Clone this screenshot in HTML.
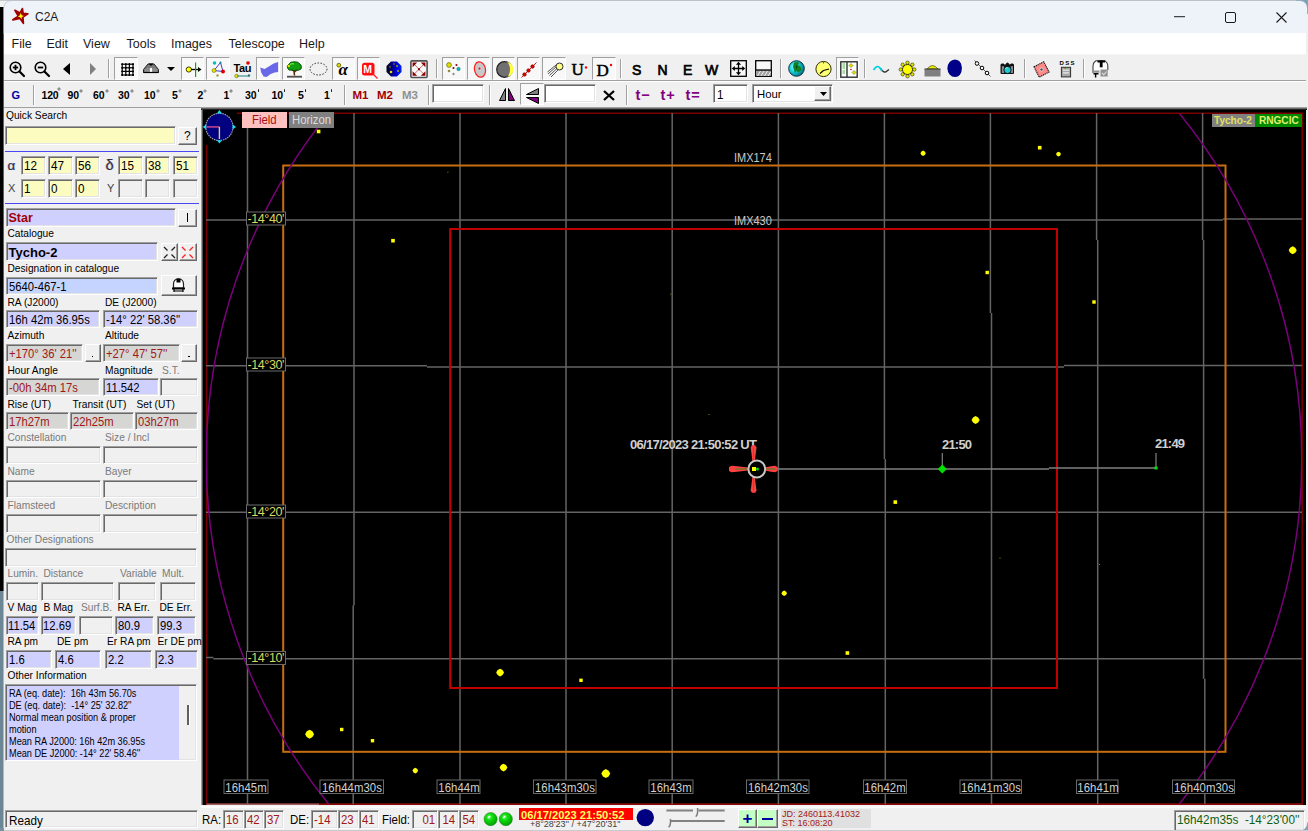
<!DOCTYPE html><html><head><meta charset="utf-8"><style>
html,body{margin:0;padding:0;}
body{width:1308px;height:831px;overflow:hidden;position:relative;background:#f0f0f0;font-family:'Liberation Sans',sans-serif;}
.a{position:absolute;box-sizing:content-box;}
.t{position:absolute;white-space:pre;line-height:1;font-family:'Liberation Sans',sans-serif;}
.sk{border-top:1px solid #a0a0a0;border-left:1px solid #a0a0a0;border-bottom:1px solid #fff;border-right:1px solid #fff;box-shadow:inset 1px 1px 0 #696969, inset -1px -1px 0 #e3e3e3;}
.rz{border-top:1px solid #fff;border-left:1px solid #fff;border-bottom:1px solid #696969;border-right:1px solid #696969;box-shadow:inset -1px -1px 0 #a0a0a0;}
.pr{border-top:1px solid #a0a0a0;border-left:1px solid #a0a0a0;border-bottom:1px solid #fff;border-right:1px solid #fff;background:#f8f8f8;}
svg{overflow:visible}
</style></head><body>
<div class="a" style="left:0px;top:0px;width:1308px;height:831px;background:#f0f0f0"></div>
<div class="a" style="left:0px;top:0px;width:4px;height:7px;background:#f2f2f2"></div>
<div class="a" style="left:0px;top:7px;width:3px;height:584px;background:#000"></div>
<div class="a" style="left:3px;top:7px;width:1px;height:584px;background:#606060"></div>
<div class="a" style="left:0px;top:591px;width:3px;height:240px;background:#6b8796"></div>
<div class="a" style="left:3px;top:591px;width:1px;height:240px;background:#b0b8c0"></div>
<div class="a" style="left:0px;top:0px;width:1308px;height:1px;background:#c4c8cc"></div>
<div class="a" style="left:1296px;top:0px;width:12px;height:14px;background:#7ba1bd"></div>
<div class="a" style="left:4px;top:1px;width:1303px;height:32px;background:#eef2f9;border-radius:7px 7px 0 0;box-shadow:0 0 0 0.5px #b8bcc0"></div>
<div class="a" style="left:1306px;top:14px;width:2px;height:817px;background:#f0f0f0"></div>
<svg class="a" style="left:0px;top:0px;" width="40" height="30" viewBox="0 0 40 30"><path d="M22.4 8.6 L23.1 13.4 L27.9 13.9 L22.9 17.1 L23.4 23.3 L20 18.4 L12.9 19.8 L18.3 16.1 L14.9 10.3 L20 13.1 Z" fill="#a00000" stroke="#a00000" stroke-width="1.7" stroke-linejoin="round"/><path d="M20.7 12.8 L21.7 15.2 L24 16 L21.8 17 L21.5 19.3 L20.1 17.3 L17.8 16.4 L19.9 15.3 Z" fill="#ffff00"/></svg>
<div class="t" style="left:35px;top:11.34px;font-size:12px;color:#1a1a1a;font-weight:normal;">C2A</div>
<svg class="a" style="left:1174px;top:16px;" width="11" height="2" viewBox="0 0 11 2"><rect x="0" y="0.2" width="11" height="1" fill="#1a1a1a"/></svg>
<svg class="a" style="left:1225px;top:12px;" width="11" height="11" viewBox="0 0 11 11"><rect x="0.5" y="0.5" width="10" height="10" rx="1.5" fill="none" stroke="#1a1a1a" stroke-width="1"/></svg>
<svg class="a" style="left:1276px;top:12px;" width="11" height="11" viewBox="0 0 11 11"><path d="M0.5 0.5 L10.5 10.5 M10.5 0.5 L0.5 10.5" stroke="#1a1a1a" stroke-width="1.1"/></svg>
<div class="a" style="left:4px;top:33px;width:1302px;height:21px;background:#ffffff"></div>
<div class="a" style="left:4px;top:54px;width:1302px;height:1px;background:#f4f4f4"></div>
<div class="t" style="left:11.5px;top:37.92px;font-size:12.5px;color:#1a1a1a;font-weight:normal;">File</div>
<div class="t" style="left:46.5px;top:37.92px;font-size:12.5px;color:#1a1a1a;font-weight:normal;">Edit</div>
<div class="t" style="left:83px;top:37.92px;font-size:12.5px;color:#1a1a1a;font-weight:normal;">View</div>
<div class="t" style="left:126.5px;top:37.92px;font-size:12.5px;color:#1a1a1a;font-weight:normal;">Tools</div>
<div class="t" style="left:171px;top:37.92px;font-size:12.5px;color:#1a1a1a;font-weight:normal;">Images</div>
<div class="t" style="left:228.5px;top:37.92px;font-size:12.5px;color:#1a1a1a;font-weight:normal;">Telescope</div>
<div class="t" style="left:299px;top:37.92px;font-size:12.5px;color:#1a1a1a;font-weight:normal;">Help</div>
<div class="a" style="left:4px;top:55px;width:1302px;height:52px;background:#f0f0f0"></div>
<div class="a" style="left:4px;top:80px;width:1302px;height:1px;background:#a0a0a0"></div>
<div class="a" style="left:4px;top:81px;width:1302px;height:1px;background:#ffffff"></div>
<div class="a" style="left:4px;top:107px;width:197px;height:1px;background:#a0a0a0"></div>
<div class="a" style="left:108px;top:59px;width:1px;height:19px;background:#a0a0a0"></div>
<div class="a" style="left:109px;top:59px;width:1px;height:19px;background:#ffffff"></div>
<div class="a" style="left:436px;top:59px;width:1px;height:19px;background:#a0a0a0"></div>
<div class="a" style="left:437px;top:59px;width:1px;height:19px;background:#ffffff"></div>
<div class="a" style="left:620px;top:59px;width:1px;height:19px;background:#a0a0a0"></div>
<div class="a" style="left:621px;top:59px;width:1px;height:19px;background:#ffffff"></div>
<div class="a" style="left:780px;top:59px;width:1px;height:19px;background:#a0a0a0"></div>
<div class="a" style="left:781px;top:59px;width:1px;height:19px;background:#ffffff"></div>
<div class="a" style="left:864px;top:59px;width:1px;height:19px;background:#a0a0a0"></div>
<div class="a" style="left:865px;top:59px;width:1px;height:19px;background:#ffffff"></div>
<div class="a" style="left:1024px;top:59px;width:1px;height:19px;background:#a0a0a0"></div>
<div class="a" style="left:1025px;top:59px;width:1px;height:19px;background:#ffffff"></div>
<div class="a" style="left:1083px;top:59px;width:1px;height:19px;background:#a0a0a0"></div>
<div class="a" style="left:1084px;top:59px;width:1px;height:19px;background:#ffffff"></div>
<div class="a pr" style="left:114px;top:57px;width:22px;height:21px"></div>
<div class="a pr" style="left:181px;top:57px;width:21px;height:21px"></div>
<div class="a pr" style="left:206px;top:57px;width:22px;height:21px"></div>
<div class="a pr" style="left:256px;top:57px;width:22px;height:21px"></div>
<div class="a pr" style="left:282px;top:57px;width:21px;height:21px"></div>
<div class="a pr" style="left:332px;top:57px;width:21px;height:21px"></div>
<div class="a pr" style="left:357px;top:57px;width:21px;height:21px"></div>
<div class="a pr" style="left:442px;top:57px;width:21px;height:21px"></div>
<div class="a pr" style="left:467px;top:57px;width:21px;height:21px"></div>
<div class="a pr" style="left:492px;top:57px;width:21px;height:21px"></div>
<div class="a pr" style="left:517px;top:57px;width:21px;height:21px"></div>
<div class="a pr" style="left:542px;top:57px;width:22px;height:21px"></div>
<div class="a pr" style="left:592px;top:57px;width:22px;height:21px"></div>
<div class="a pr" style="left:836px;top:57px;width:21px;height:21px"></div>
<svg class="a" style="left:9px;top:61px;" width="16" height="16" viewBox="0 0 16 16"><circle cx="6.5" cy="6.5" r="5.3" fill="none" stroke="#000" stroke-width="1.6"/><path d="M10.5 10.5 L15 15" stroke="#000" stroke-width="2.2" stroke-linecap="round"/><path d="M3.8 6.5 H9.2" stroke="#000" stroke-width="1.8"/><path d="M6.5 3.8 V9.2" stroke="#000" stroke-width="1.8"/></svg>
<svg class="a" style="left:33.5px;top:61px;" width="16" height="16" viewBox="0 0 16 16"><circle cx="6.5" cy="6.5" r="5.3" fill="none" stroke="#000" stroke-width="1.6"/><path d="M10.5 10.5 L15 15" stroke="#000" stroke-width="2.2" stroke-linecap="round"/><path d="M3.8 6.5 H9.2" stroke="#000" stroke-width="1.8"/></svg>
<svg class="a" style="left:63px;top:63px;" width="7" height="12" viewBox="0 0 7 12"><path d="M7 0 L0 6 L7 12 Z" fill="#000"/></svg>
<svg class="a" style="left:90px;top:63px;" width="6" height="12" viewBox="0 0 6 12"><path d="M0 0 L6 6 L0 12 Z" fill="#808080"/></svg>
<svg class="a" style="left:120.5px;top:63px;" width="13" height="13" viewBox="0 0 13 13"><rect x="0.6" y="0.5" width="1.2" height="12.5" fill="#000"/><rect x="4.2" y="0.5" width="1.2" height="12.5" fill="#000"/><rect x="7.8" y="0.5" width="1.2" height="12.5" fill="#000"/><rect x="11.4" y="0.5" width="1.2" height="12.5" fill="#000"/><rect x="0.5" y="0.6" width="12.5" height="1.2" fill="#000"/><rect x="0.5" y="4.2" width="12.5" height="1.2" fill="#000"/><rect x="0.5" y="7.8" width="12.5" height="1.2" fill="#000"/><rect x="0.5" y="11.4" width="12.5" height="1.2" fill="#000"/><circle cx="1.2" cy="1.2" r="0.9" fill="#000"/><circle cx="1.2" cy="4.8" r="0.9" fill="#000"/><circle cx="1.2" cy="8.4" r="0.9" fill="#000"/><circle cx="1.2" cy="12.0" r="0.9" fill="#000"/><circle cx="4.8" cy="1.2" r="0.9" fill="#000"/><circle cx="4.8" cy="4.8" r="0.9" fill="#000"/><circle cx="4.8" cy="8.4" r="0.9" fill="#000"/><circle cx="4.8" cy="12.0" r="0.9" fill="#000"/><circle cx="8.4" cy="1.2" r="0.9" fill="#000"/><circle cx="8.4" cy="4.8" r="0.9" fill="#000"/><circle cx="8.4" cy="8.4" r="0.9" fill="#000"/><circle cx="8.4" cy="12.0" r="0.9" fill="#000"/><circle cx="12.0" cy="1.2" r="0.9" fill="#000"/><circle cx="12.0" cy="4.8" r="0.9" fill="#000"/><circle cx="12.0" cy="8.4" r="0.9" fill="#000"/><circle cx="12.0" cy="12.0" r="0.9" fill="#000"/></svg>
<svg class="a" style="left:143px;top:63px;" width="16" height="10" viewBox="0 0 16 10"><path d="M0.5 9.5 V6.5 L5 1 H11 L15.5 6.5 V9.5 Z" fill="#7a7a7a" stroke="#202020" stroke-width="1"/><path d="M3 9 V6 M5 9 V5 M11 9 V5 M13 9 V6" stroke="#b0b0b0" stroke-width=".7"/><path d="M6.8 9.5 V5.5 Q8 4 9.2 5.5 V9.5Z" fill="#fff"/><path d="M5.5 0.5 H10.5 L8 3 Z" fill="#000"/><path d="M0.5 9.5 H15.5" stroke="#000" stroke-width="1.2"/></svg>
<svg class="a" style="left:167px;top:67px;" width="8" height="4" viewBox="0 0 8 4"><path d="M0 0 H8 L4 4 Z" fill="#000"/></svg>
<svg class="a" style="left:185px;top:62px;" width="18" height="16" viewBox="0 0 18 16"><circle cx="3.8" cy="7.5" r="2.6" fill="#ffff00" stroke="#404000" stroke-width="1"/><path d="M6 7.5 H15" stroke="#000" stroke-width="1.3"/><path d="M13 5 L16.5 7.5 L13 10" fill="#000"/><rect x="10" y="0.5" width="1.2" height="14.5" fill="#00b000"/></svg>
<svg class="a" style="left:211px;top:61px;" width="18" height="17" viewBox="0 0 18 17"><path d="M9.5 1.5 L12 10.5 L3 9.5 Z" fill="none" stroke="#4040c0" stroke-width="1"/><circle cx="3.5" cy="2" r="1.8" fill="#00c0c0"/><circle cx="9.5" cy="1.5" r="1" fill="#008080"/><circle cx="3" cy="9.5" r="2" fill="#e0e000" stroke="#606000" stroke-width=".5"/><circle cx="12" cy="10.5" r="2" fill="#e00000"/><circle cx="6.5" cy="14.5" r="1.2" fill="#a0a040"/></svg>
<svg class="a" style="left:234px;top:61px;" width="18" height="17" viewBox="0 0 18 17"><text x="-0.5" y="10.8" font-family="Liberation Sans" font-weight="bold" font-size="11" letter-spacing="-0.4" fill="#000">Tau</text><circle cx="14" cy="2" r="1.8" fill="#e00000"/><circle cx="2.5" cy="15" r="1.8" fill="#e0e000" stroke="#606000" stroke-width=".5"/><path d="M3 15 H15" stroke="#208080" stroke-width="1"/><circle cx="15" cy="14.5" r="1.2" fill="#208080"/></svg>
<svg class="a" style="left:260px;top:61px;" width="19" height="17" viewBox="0 0 19 17"><path d="M0.2 6.4 L4.6 7.9 L9.6 4.9 L13.6 2.5 L18.1 1 L18.1 10.9 L14.6 11.4 L10.6 12.9 L6.6 15.9 L3.6 15.4 L1.2 11.4 Z" fill="#6868e8"/></svg>
<svg class="a" style="left:286px;top:60.5px;" width="17" height="17" viewBox="0 0 17 17"><path d="M8.5 14.5 L8 10 L5 8 M8.5 11 L12 8" stroke="#603010" stroke-width="1.6" fill="none"/><path d="M2 8 Q0 5 3 3 Q4 0.5 8 0.8 Q12 0.3 14 3 Q16.5 5 15 8 Q13 10 10 9 Q8 10.5 6 9 Q3 10 2 8Z" fill="#10a010" stroke="#004000" stroke-width=".8"/><path d="M4 3.5 Q6 2 8 3" stroke="#80ff40" stroke-width="1" fill="none"/><circle cx="2.8" cy="5" r="1.2" fill="#e0e000"/><rect x="1" y="14.8" width="15" height="1.8" fill="#505050"/></svg>
<svg class="a" style="left:309px;top:62px;" width="19" height="14" viewBox="0 0 19 14"><ellipse cx="9.5" cy="7" rx="8.5" ry="6" fill="none" stroke="#303030" stroke-width="1" stroke-dasharray="1.5 1.5"/></svg>
<svg class="a" style="left:336px;top:62px;" width="17" height="14" viewBox="0 0 17 14"><circle cx="2.8" cy="3.2" r="1.9" fill="#e0e000" stroke="#404000" stroke-width=".7"/><text x="2.5" y="12.8" font-family="Liberation Serif" font-style="italic" font-weight="bold" font-size="17" fill="#000">α</text></svg>
<svg class="a" style="left:361px;top:61.5px;" width="17" height="17" viewBox="0 0 17 17"><rect x="1" y="0.8" width="12.5" height="12.8" rx="2.5" fill="#ff1010"/><text x="2.3" y="11" font-family="Liberation Sans" font-weight="bold" font-size="10.5" fill="#fff">M</text><path d="M12 12 L16.5 16.5" stroke="#ff2020" stroke-width="1.3"/></svg>
<svg class="a" style="left:386px;top:61px;" width="16" height="16" viewBox="0 0 16 16"><defs><linearGradient id="og" x1="0" x2="1" y1="0" y2="0"><stop offset="0" stop-color="#000010"/><stop offset=".55" stop-color="#0000c0"/><stop offset="1" stop-color="#0020ff"/></linearGradient></defs><path d="M5 0.5 H11 L15.5 5 V11 L11 15.5 H5 L0.5 11 V5 Z" fill="url(#og)"/><circle cx="5" cy="11" r="1.3" fill="#e0e000"/><circle cx="11" cy="5" r="1" fill="#a0a000"/><circle cx="12" cy="10" r="1" fill="#a0a000"/><circle cx="4" cy="6" r=".8" fill="#a0a000"/><circle cx="8" cy="3" r=".8" fill="#a0a000"/></svg>
<svg class="a" style="left:410px;top:59.5px;" width="18" height="18.5" viewBox="0 0 18 18.5"><rect x="0.9" y="0.9" width="16.2" height="16.6" rx="1" fill="#f8f8f8" stroke="#505050" stroke-width="1.6"/><path d="M4 4 L14 14.4 M14 4 L4 14.4" stroke="#c87070" stroke-width="1"/><path d="M2.6 2.6 h4.6 l-4.6 4.6z M15.4 2.6 h-4.6 l4.6 4.6z M2.6 15.8 h4.6 l-4.6 -4.6z M15.4 15.8 h-4.6 l4.6 -4.6z" fill="#8c0000"/><rect x="8" y="8.2" width="2" height="2" fill="#8c0000"/></svg>
<svg class="a" style="left:446px;top:62px;" width="16" height="15" viewBox="0 0 16 15"><circle cx="3" cy="3" r="2.4" fill="#e0e000" stroke="#505000" stroke-width=".6"/><circle cx="10.5" cy="3" r="1.1" fill="#801010"/><circle cx="7.5" cy="6" r="1.1" fill="#801010"/><circle cx="12.5" cy="7" r="1.7" fill="#00c0d0" stroke="#006060" stroke-width=".5"/><path d="M3 7.5 L4.5 9 L3 10.5 L1.5 9Z" fill="#808020"/><path d="M7.5 10.5 L9 12 L7.5 13.5 L6 12Z" fill="#909090"/></svg>
<svg class="a" style="left:473px;top:61px;" width="14" height="18" viewBox="0 0 14 18"><ellipse cx="7" cy="8.5" rx="5.5" ry="7.8" transform="rotate(-12 7 8.5)" fill="#c8c8c8" stroke="#ff2020" stroke-width="1.2"/><circle cx="6.5" cy="7.5" r="1" fill="#ff0000"/></svg>
<svg class="a" style="left:496px;top:61px;" width="17" height="17" viewBox="0 0 17 17"><circle cx="8.5" cy="8.5" r="7.8" fill="#707070" stroke="#202020" stroke-width="1.2"/><path d="M10 1 A7.5 7.5 0 0 1 10 16 A4 7.5 0 0 0 10 1Z" fill="#ffff40"/></svg>
<svg class="a" style="left:521px;top:62px;" width="16" height="16" viewBox="0 0 16 16"><path d="M0.5 15.5 L15.5 0.5" stroke="#c02020" stroke-width="1"/><circle cx="3.5" cy="12.5" r="1.8" fill="#e00000" stroke="#600000" stroke-width=".5"/><circle cx="7.5" cy="8.5" r="1.8" fill="#e00000" stroke="#600000" stroke-width=".5"/><circle cx="11.5" cy="4.5" r="1.8" fill="#e00000" stroke="#600000" stroke-width=".5"/></svg>
<svg class="a" style="left:547px;top:62px;" width="17" height="16" viewBox="0 0 17 16"><path d="M1 12 L10 4 M2.5 13.5 L11 5.5 M4 15 L12 7 M0.5 10 L9 3" stroke="#404040" stroke-width=".9"/><circle cx="12.5" cy="4.5" r="3.5" fill="#ffff80" stroke="#303030" stroke-width="1"/></svg>
<svg class="a" style="left:572px;top:62px;" width="16" height="14" viewBox="0 0 16 14"><text x="-0.5" y="13" font-family="Liberation Serif" font-size="17" fill="#000" stroke="#000" stroke-width=".5">U</text><circle cx="14" cy="5.5" r="1.2" fill="#ff0000"/></svg>
<svg class="a" style="left:597px;top:62px;" width="17" height="14" viewBox="0 0 17 14"><text x="-0.5" y="13.5" font-family="Liberation Serif" font-size="17" fill="#000" stroke="#000" stroke-width=".5">D</text><circle cx="14" cy="3" r="1.2" fill="#ff0000"/></svg>
<div class="t" style="left:632px;top:62.65px;font-size:14px;color:#000;font-weight:normal;-webkit-text-stroke:0.7px #000">S</div>
<div class="t" style="left:657.5px;top:62.65px;font-size:14px;color:#000;font-weight:normal;-webkit-text-stroke:0.7px #000">N</div>
<div class="t" style="left:683px;top:62.65px;font-size:14px;color:#000;font-weight:normal;-webkit-text-stroke:0.7px #000">E</div>
<div class="t" style="left:705px;top:62.65px;font-size:14px;color:#000;font-weight:normal;-webkit-text-stroke:0.7px #000">W</div>
<svg class="a" style="left:730px;top:60px;" width="17" height="17" viewBox="0 0 17 17"><rect x="0.7" y="0.7" width="15.6" height="15.6" fill="#f8f8f8" stroke="#000" stroke-width="1.3"/><path d="M8.5 3.5 V13.5 M3.5 8.5 H13.5" stroke="#000" stroke-width="1.3"/><path d="M8.5 1.8 l-2.6 3 h5.2z M8.5 15.2 l-2.6 -3 h5.2z M1.8 8.5 l3 -2.6 v5.2z M15.2 8.5 l-3 -2.6 v5.2z" fill="#000"/></svg>
<svg class="a" style="left:755px;top:60px;" width="17" height="17" viewBox="0 0 17 17"><rect x="0.7" y="0.7" width="15.6" height="15.6" fill="#f8f8f8" stroke="#000" stroke-width="1.3"/><rect x="1.3" y="10" width="14.4" height="5.7" fill="#a0a0a0"/><path d="M1 10 H16" stroke="#000" stroke-width="1.3"/><path d="M2.5 16 L5.5 11 M6 16 L9 11 M9.5 16 L12.5 11 M13 16 L15.5 12" stroke="#f0f0f0" stroke-width="1"/></svg>
<svg class="a" style="left:788px;top:60px;" width="17" height="17" viewBox="0 0 17 17"><defs><radialGradient id="gl" cx="35%" cy="40%" r="70%"><stop offset="0" stop-color="#80ffff"/><stop offset=".5" stop-color="#10c8d8"/><stop offset="1" stop-color="#006070"/></radialGradient></defs><circle cx="8.5" cy="8.5" r="7.8" fill="url(#gl)" stroke="#103040" stroke-width="1"/><path d="M6 2.5 Q9 1.5 11 3 L10 5 L12.5 6.5 L13.5 10 L10.5 12.5 L8.5 11 L7 13 L6 9.5 L5 7 Z" fill="#108020"/><path d="M8 5 L9.5 7 L8 9 Z" fill="#004010"/></svg>
<svg class="a" style="left:815px;top:61px;" width="17" height="16" viewBox="0 0 17 16"><circle cx="8.5" cy="8" r="7.6" fill="#ffff70" stroke="#303000" stroke-width="1"/><path d="M8.5 9.5 L14 8 M8.5 9.5 L5 12.5" stroke="#000" stroke-width="1.1"/><circle cx="8.5" cy="1.8" r=".7" fill="#404040"/></svg>
<svg class="a" style="left:840px;top:61px;" width="18" height="17" viewBox="0 0 18 17"><rect x="0.8" y="0.8" width="16.4" height="15.4" fill="#fff" stroke="#303030" stroke-width="1.4"/><path d="M7 1 V16" stroke="#303030" stroke-width="1.4"/><path d="M2.5 3 H5 M2.5 5 H5 M2.5 7 H5 M2.5 10 H5 M2.5 12 H5" stroke="#40c040" stroke-width="1"/><path d="M11 2.5 l2 2 -2 2 -2 -2z M14 9.5 l2 2 -2 2 -2 -2z" fill="#e0e000" stroke="#606000" stroke-width=".5"/><circle cx="11" cy="8.5" r=".8" fill="#e00000"/></svg>
<svg class="a" style="left:873px;top:65px;" width="17" height="9" viewBox="0 0 17 9"><path d="M0.5 5 Q4 -1 7.5 3.5" stroke="#00d0e0" stroke-width="1.6" fill="none"/><path d="M7.5 3.5 Q11 9 14 6 L16 4.5" stroke="#303030" stroke-width="1.4" fill="none"/><path d="M7 3 L9 6" stroke="#00d0e0" stroke-width="1.6"/></svg>
<svg class="a" style="left:899px;top:61px;" width="17" height="17" viewBox="0 0 17 17"><circle cx="15.3" cy="8.5" r="1.7" fill="#e0e000" stroke="#303000" stroke-width=".6"/><circle cx="13.308317281076405" cy="13.30833494304442" r="1.7" fill="#e0e000" stroke="#303000" stroke-width=".6"/><circle cx="8.499975022205298" cy="15.299999999954125" r="1.7" fill="#e0e000" stroke="#303000" stroke-width=".6"/><circle cx="3.6916473950524438" cy="13.308299619043517" r="1.7" fill="#e0e000" stroke="#303000" stroke-width=".6"/><circle cx="1.700000000183497" cy="8.499950044410594" r="1.7" fill="#e0e000" stroke="#303000" stroke-width=".6"/><circle cx="3.691718043054248" cy="3.6916297332141816" r="1.7" fill="#e0e000" stroke="#303000" stroke-width=".6"/><circle cx="8.500074933384106" cy="1.700000000412869" r="1.7" fill="#e0e000" stroke="#303000" stroke-width=".6"/><circle cx="13.308387928559203" cy="3.691735705216887" r="1.7" fill="#e0e000" stroke="#303000" stroke-width=".6"/><circle cx="8.5" cy="8.5" r="5" fill="#ffff00" stroke="#303000" stroke-width="1"/></svg>
<svg class="a" style="left:924px;top:63px;" width="17" height="14" viewBox="0 0 17 14"><path d="M3 6 Q8.5 -1 14 6 Z" fill="#e8e800" stroke="#505000" stroke-width=".7"/><rect x="0.5" y="6" width="16" height="7.5" fill="#808080"/><path d="M0.5 6 H16.5" stroke="#303030" stroke-width="1"/></svg>
<svg class="a" style="left:947px;top:59px;" width="17" height="19" viewBox="0 0 17 19"><ellipse cx="8" cy="9.2" rx="7.6" ry="8.8" fill="#000088"/><path d="M12.5 1.5 Q17.5 9.2 12.5 17 Q16.2 17 16.2 9.2 Q16.2 1.5 12.5 1.5Z" fill="#f4f4f4"/></svg>
<svg class="a" style="left:974px;top:60px;" width="17" height="17" viewBox="0 0 17 17"><path d="M0.5 0.5 L16.5 16.5" stroke="#303030" stroke-width=".8"/><circle cx="3" cy="3.5" r="1.8" fill="#fff" stroke="#000" stroke-width="1"/><circle cx="8" cy="8" r="1.8" fill="#fff" stroke="#000" stroke-width="1"/><circle cx="13" cy="13" r="1.8" fill="#fff" stroke="#000" stroke-width="1"/></svg>
<svg class="a" style="left:999px;top:61.5px;" width="17" height="13" viewBox="0 0 17 13"><path d="M1.5 3 Q1.5 1.5 3 1.5 H4 Q5 1.5 5.5 2.5 H6.5 Q7.5 0.5 8.5 0.5 Q9.5 0.5 10.5 2.5 H11 Q11.5 1.5 12.5 1.5 H13.5 Q15 1.5 15 3 V11 Q15 12 14 12 H2.5 Q1.5 12 1.5 11 Z" fill="#101010"/><rect x="2.8" y="4.2" width="2.4" height="6.8" fill="#8a8a8a"/><rect x="11.6" y="4.2" width="2.4" height="6.8" fill="#8a8a8a"/><circle cx="8.5" cy="8" r="3.6" fill="#20c8d0" stroke="#000" stroke-width=".8"/><path d="M6.5 6.5 Q7.5 5.5 8.5 6" stroke="#a0ffff" stroke-width="1" fill="none"/></svg>
<svg class="a" style="left:1032.5px;top:61px;" width="17" height="17" viewBox="0 0 17 17"><path d="M1 5.8 L10.8 0.8 L16 11 L6.2 16.2 Z" fill="#ff8a8a" stroke="#181818" stroke-width="1.1" stroke-dasharray="1.3 0.7"/><circle cx="8.5" cy="8.5" r="1.6" fill="#505050" stroke="#fff" stroke-width=".6"/></svg>
<svg class="a" style="left:1059px;top:60px;" width="16" height="18" viewBox="0 0 16 18"><text x="0.5" y="5.2" font-family="Liberation Sans" font-weight="bold" font-size="6" fill="#000" letter-spacing="1.3">DSS</text><rect x="2.4" y="7.3" width="9.2" height="9.6" fill="#a8a8a8" stroke="#303030" stroke-width="1"/><rect x="4" y="9.5" width="6" height="1.2" fill="#f0f0f0"/><rect x="4" y="12.3" width="6" height="1.2" fill="#f0f0f0"/><circle cx="6.2" cy="8.6" r=".8" fill="#ff4040"/><circle cx="8" cy="8.6" r=".8" fill="#40e040"/></svg>
<svg class="a" style="left:1092px;top:59.5px;" width="17" height="18" viewBox="0 0 17 18"><path d="M1 13 V6 Q1 3 3 1.5 L4 0.8 H13 L15 3 Q15.8 4 15.8 6 V10" fill="#fff" stroke="#404040" stroke-width="1.1"/><rect x="5.5" y="0.5" width="7.5" height="2" fill="#000"/><rect x="7.8" y="0.5" width="2.8" height="6.8" fill="#000"/><rect x="8.5" y="9.5" width="7.2" height="7" fill="#909090"/><path d="M10 13 L11.8 14.8 L14.5 11.5" stroke="#e0e0e0" stroke-width="1.1" fill="none"/><rect x="1" y="10.5" width="6.5" height="2.2" fill="#909090"/><path d="M1.5 13.8 H6.5 M3.6 13.8 V17.5" stroke="#000" stroke-width="1.4"/></svg>
<div class="t" style="left:11.5px;top:90.19px;font-size:11px;color:#0000a0;font-weight:bold;">G</div>
<div class="a" style="left:33px;top:85px;width:1px;height:20px;background:#a0a0a0"></div>
<div class="a" style="left:34px;top:85px;width:1px;height:20px;background:#ffffff"></div>
<div class="t" style="left:41.5px;top:90.31px;font-size:10.5px;color:#000;font-weight:bold;letter-spacing:-0.2px">120</div>
<svg class="a" style="left:57.3px;top:86.8px;" width="4" height="4" viewBox="0 0 4 4"><path d="M2 0 L4 2 L2 4 L0 2Z" fill="#909090"/></svg>
<div class="t" style="left:67.5px;top:90.31px;font-size:10.5px;color:#000;font-weight:bold;letter-spacing:-0.2px">90</div>
<svg class="a" style="left:79.2px;top:89.2px;" width="4" height="4" viewBox="0 0 4 4"><path d="M2 0 L4 2 L2 4 L0 2Z" fill="#909090"/></svg>
<div class="t" style="left:93px;top:90.31px;font-size:10.5px;color:#000;font-weight:bold;letter-spacing:-0.2px">60</div>
<svg class="a" style="left:104.7px;top:89.2px;" width="4" height="4" viewBox="0 0 4 4"><path d="M2 0 L4 2 L2 4 L0 2Z" fill="#909090"/></svg>
<div class="t" style="left:118px;top:90.31px;font-size:10.5px;color:#000;font-weight:bold;letter-spacing:-0.2px">30</div>
<svg class="a" style="left:129.70000000000002px;top:89.2px;" width="4" height="4" viewBox="0 0 4 4"><path d="M2 0 L4 2 L2 4 L0 2Z" fill="#909090"/></svg>
<div class="t" style="left:144px;top:90.31px;font-size:10.5px;color:#000;font-weight:bold;letter-spacing:-0.2px">10</div>
<svg class="a" style="left:155.70000000000002px;top:89.2px;" width="4" height="4" viewBox="0 0 4 4"><path d="M2 0 L4 2 L2 4 L0 2Z" fill="#909090"/></svg>
<div class="t" style="left:172px;top:90.31px;font-size:10.5px;color:#000;font-weight:bold;letter-spacing:-0.2px">5</div>
<svg class="a" style="left:177.6px;top:89.2px;" width="4" height="4" viewBox="0 0 4 4"><path d="M2 0 L4 2 L2 4 L0 2Z" fill="#909090"/></svg>
<div class="t" style="left:197.5px;top:90.31px;font-size:10.5px;color:#000;font-weight:bold;letter-spacing:-0.2px">2</div>
<svg class="a" style="left:203.1px;top:89.2px;" width="4" height="4" viewBox="0 0 4 4"><path d="M2 0 L4 2 L2 4 L0 2Z" fill="#909090"/></svg>
<div class="t" style="left:223.5px;top:90.31px;font-size:10.5px;color:#000;font-weight:bold;letter-spacing:-0.2px">1</div>
<svg class="a" style="left:229.1px;top:89.2px;" width="4" height="4" viewBox="0 0 4 4"><path d="M2 0 L4 2 L2 4 L0 2Z" fill="#909090"/></svg>
<div class="t" style="left:245px;top:90.31px;font-size:10.5px;color:#000;font-weight:bold;letter-spacing:-0.2px">30</div>
<div class="a" style="left:257.6px;top:88.6px;width:1.3px;height:3.6px;background:#202020;border-radius:0.6px"></div>
<div class="t" style="left:271.5px;top:90.31px;font-size:10.5px;color:#000;font-weight:bold;letter-spacing:-0.2px">10</div>
<div class="a" style="left:284.1px;top:88.6px;width:1.3px;height:3.6px;background:#202020;border-radius:0.6px"></div>
<div class="t" style="left:298px;top:90.31px;font-size:10.5px;color:#000;font-weight:bold;letter-spacing:-0.2px">5</div>
<div class="a" style="left:304.5px;top:88.6px;width:1.3px;height:3.6px;background:#202020;border-radius:0.6px"></div>
<div class="t" style="left:324px;top:90.31px;font-size:10.5px;color:#000;font-weight:bold;letter-spacing:-0.2px">1</div>
<div class="a" style="left:330.5px;top:88.6px;width:1.3px;height:3.6px;background:#202020;border-radius:0.6px"></div>
<div class="a" style="left:344px;top:85px;width:1px;height:20px;background:#a0a0a0"></div>
<div class="a" style="left:345px;top:85px;width:1px;height:20px;background:#ffffff"></div>
<div class="t" style="left:352.5px;top:89.77px;font-size:11.5px;color:#a00000;font-weight:bold;letter-spacing:-0.2px">M1</div>
<div class="t" style="left:377px;top:89.77px;font-size:11.5px;color:#a00000;font-weight:bold;letter-spacing:-0.2px">M2</div>
<div class="t" style="left:402px;top:89.77px;font-size:11.5px;color:#909090;font-weight:bold;letter-spacing:-0.2px">M3</div>
<div class="a" style="left:428px;top:85px;width:1px;height:20px;background:#a0a0a0"></div>
<div class="a" style="left:429px;top:85px;width:1px;height:20px;background:#ffffff"></div>
<div class="a sk" style="left:432px;top:84px;width:50px;height:17px;background:#ffffff"></div>
<div class="a" style="left:489px;top:85px;width:1px;height:20px;background:#a0a0a0"></div>
<div class="a" style="left:490px;top:85px;width:1px;height:20px;background:#ffffff"></div>
<svg class="a" style="left:499px;top:88px;" width="16" height="13" viewBox="0 0 16 13"><path d="M6.5 0.5 L6.5 12.5 L0.5 12.5 Z" fill="#808080" stroke="#000" stroke-width="1"/><path d="M9.5 0.5 L9.5 12.5 L15.5 12.5 Z" fill="#800080" stroke="#000" stroke-width="1"/></svg>
<div class="a pr" style="left:520px;top:83px;width:22px;height:20px"></div>
<svg class="a" style="left:526px;top:88px;" width="13" height="16" viewBox="0 0 13 16"><path d="M12.5 0.5 L12.5 6.5 L0.5 6.5 Z" fill="#808080" stroke="#000" stroke-width="1"/><path d="M12.5 9.5 L12.5 15.5 L0.5 9.5 Z" fill="#800080" stroke="#000" stroke-width="1"/></svg>
<div class="a sk" style="left:544px;top:84px;width:50px;height:17px;background:#ffffff"></div>
<svg class="a" style="left:603px;top:89.5px;" width="12" height="11" viewBox="0 0 12 11"><path d="M1 1 L11 10 M11 1 L1 10" stroke="#000" stroke-width="2.3"/></svg>
<div class="a" style="left:626px;top:85px;width:1px;height:20px;background:#a0a0a0"></div>
<div class="a" style="left:627px;top:85px;width:1px;height:20px;background:#ffffff"></div>
<div class="t" style="left:635.5px;top:87.53px;font-size:14.5px;color:#800080;font-weight:bold;letter-spacing:0.8px">t−</div>
<div class="t" style="left:660.5px;top:87.53px;font-size:14.5px;color:#800080;font-weight:bold;letter-spacing:0.8px">t+</div>
<div class="t" style="left:685.5px;top:87.53px;font-size:14.5px;color:#800080;font-weight:bold;letter-spacing:0.8px">t=</div>
<div class="a sk" style="left:713px;top:84px;width:33px;height:17px;background:#ffffff"></div>
<div class="t" style="left:717px;top:87.89px;font-size:13.6px;color:#000;font-weight:normal;transform:scaleX(0.86);transform-origin:0 0;">1</div>
<div class="a sk" style="left:752px;top:84px;width:79px;height:17px;background:#ffffff"></div>
<div class="t" style="left:757px;top:88.91000000000001px;font-size:11.8px;color:#000;font-weight:normal;transform:scaleX(0.96);transform-origin:0 0;">Hour</div>
<div class="a rz" style="left:814px;top:86px;width:15px;height:13px;background:#f0f0f0"></div>
<svg class="a" style="left:819.5px;top:92px;" width="7" height="4" viewBox="0 0 7 4"><path d="M0 0 H7 L3.5 4Z" fill="#000"/></svg>
<div class="a" style="left:4px;top:108px;width:197px;height:697px;background:#f0f0f0"></div>
<div class="a" style="left:201px;top:107px;width:1px;height:698px;background:#a0a0a0"></div>
<div class="t" style="left:6px;top:111.17px;font-size:10.2px;color:#000;font-weight:normal;">Quick Search</div>
<div class="a sk" style="left:5px;top:126px;width:169px;height:17px;background:#fcfcc0"></div>
<div class="a rz" style="left:178px;top:127px;width:17px;height:16px;background:#f0f0f0"></div>
<div class="t" style="left:184px;top:130.34px;font-size:12px;color:#000;font-weight:normal;">?</div>
<div class="a" style="left:5px;top:150.5px;width:194px;height:1.6px;background:#4848f4"></div>
<div class="t" style="left:7.6px;top:158.63000000000002px;font-size:13.2px;color:#303050;font-weight:normal;text-shadow:-0.5px 0 0 rgba(200,120,40,.5),0.5px 0 0 rgba(40,80,220,.5)">α</div>
<div class="a sk" style="left:20.5px;top:156px;width:23.0px;height:16.5px;background:#fcfcc0"></div>
<div class="t" style="left:23.5px;top:159.49px;font-size:13.6px;color:#000;font-weight:normal;transform:scaleX(0.86);transform-origin:0 0;">12</div>
<div class="a sk" style="left:47.5px;top:156px;width:23.0px;height:16.5px;background:#fcfcc0"></div>
<div class="t" style="left:50.5px;top:159.49px;font-size:13.6px;color:#000;font-weight:normal;transform:scaleX(0.86);transform-origin:0 0;">47</div>
<div class="a sk" style="left:75px;top:156px;width:23px;height:16.5px;background:#fcfcc0"></div>
<div class="t" style="left:78px;top:159.49px;font-size:13.6px;color:#000;font-weight:normal;transform:scaleX(0.86);transform-origin:0 0;">56</div>
<div class="t" style="left:105.5px;top:158.13px;font-size:14.5px;color:#30304a;font-weight:normal;text-shadow:-0.5px 0 0 rgba(200,120,40,.5),0.5px 0 0 rgba(40,80,220,.5)">δ</div>
<div class="a sk" style="left:117.5px;top:156px;width:23.0px;height:16.5px;background:#fcfcc0"></div>
<div class="t" style="left:120.5px;top:159.49px;font-size:13.6px;color:#000;font-weight:normal;transform:scaleX(0.86);transform-origin:0 0;">15</div>
<div class="a sk" style="left:145px;top:156px;width:23px;height:16.5px;background:#fcfcc0"></div>
<div class="t" style="left:148px;top:159.49px;font-size:13.6px;color:#000;font-weight:normal;transform:scaleX(0.86);transform-origin:0 0;">38</div>
<div class="a sk" style="left:172.5px;top:156px;width:23.0px;height:16.5px;background:#fcfcc0"></div>
<div class="t" style="left:175.5px;top:159.49px;font-size:13.6px;color:#000;font-weight:normal;transform:scaleX(0.86);transform-origin:0 0;">51</div>
<div class="t" style="left:8px;top:182.69px;font-size:11px;color:#404040;font-weight:normal;">X</div>
<div class="a sk" style="left:20.5px;top:179px;width:23.0px;height:16.5px;background:#fcfcc0"></div>
<div class="t" style="left:23.5px;top:182.49px;font-size:13.6px;color:#000;font-weight:normal;transform:scaleX(0.86);transform-origin:0 0;">1</div>
<div class="a sk" style="left:47.5px;top:179px;width:23.0px;height:16.5px;background:#fcfcc0"></div>
<div class="t" style="left:50.5px;top:182.49px;font-size:13.6px;color:#000;font-weight:normal;transform:scaleX(0.86);transform-origin:0 0;">0</div>
<div class="a sk" style="left:75px;top:179px;width:23px;height:16.5px;background:#fcfcc0"></div>
<div class="t" style="left:78px;top:182.49px;font-size:13.6px;color:#000;font-weight:normal;transform:scaleX(0.86);transform-origin:0 0;">0</div>
<div class="t" style="left:107px;top:182.69px;font-size:11px;color:#404040;font-weight:normal;">Y</div>
<div class="a sk" style="left:117.5px;top:179px;width:23.0px;height:16.5px;background:#f0f0f0"></div>
<div class="a sk" style="left:145px;top:179px;width:23px;height:16.5px;background:#f0f0f0"></div>
<div class="a sk" style="left:172.5px;top:179px;width:23.0px;height:16.5px;background:#f0f0f0"></div>
<div class="a" style="left:5px;top:202.8px;width:194px;height:1.6px;background:#4848f4"></div>
<div class="a sk" style="left:5.5px;top:208px;width:168.5px;height:16.5px;background:#d0d0ff"></div>
<div class="t" style="left:8.5px;top:211.92px;font-size:12.5px;color:#a00000;font-weight:bold;">Star</div>
<div class="a rz" style="left:178px;top:209px;width:17px;height:16px;background:#f0f0f0"></div>
<div class="a" style="left:187px;top:213px;width:1.3px;height:9px;background:#000"></div>
<div class="t" style="left:7.5px;top:228.87px;font-size:10.2px;color:#000;font-weight:normal;">Catalogue</div>
<div class="a sk" style="left:5.5px;top:242px;width:150.5px;height:16.5px;background:#d0d0ff"></div>
<div class="t" style="left:8.5px;top:245.5px;font-size:13px;color:#000;font-weight:bold;">Tycho-2</div>
<div class="a rz" style="left:161px;top:243px;width:15px;height:16px;background:#f0f0f0"></div>
<div class="a rz" style="left:179px;top:243px;width:16px;height:16px;background:#f0f0f0"></div>
<svg class="a" style="left:163px;top:245.5px;" width="13" height="13" viewBox="0 0 13 13"><path d="M1 1 L4.5 4.5 M12 1 L8.5 4.5 M1 12 L4.5 8.5 M12 12 L8.5 8.5" stroke="#202020" stroke-width="1.3"/></svg>
<svg class="a" style="left:181px;top:245.5px;" width="13" height="13" viewBox="0 0 13 13"><path d="M1 1 L4.5 4.5 M12 1 L8.5 4.5 M1 12 L4.5 8.5 M12 12 L8.5 8.5" stroke="#ff2020" stroke-width="1.3"/></svg>
<div class="t" style="left:7.5px;top:263.57px;font-size:10.2px;color:#000;font-weight:normal;">Designation in catalogue</div>
<div class="a sk" style="left:5.5px;top:276.5px;width:150.5px;height:16.0px;background:#c4d4ff"></div>
<div class="t" style="left:8.5px;top:280.86px;font-size:12.8px;color:#000;font-weight:normal;transform:scaleX(0.88);transform-origin:0 0;">5640-467-1</div>
<div class="a rz" style="left:161px;top:275px;width:34px;height:19px;background:#f0f0f0"></div>
<svg class="a" style="left:171px;top:277.5px;" width="15" height="15" viewBox="0 0 15 15"><path d="M2.5 6 Q2.5 1 7.5 1 Q12.5 1 12.5 6 V10 H2.5 Z" fill="#fff" stroke="#202020" stroke-width="1.2"/><rect x="5.5" y="0.5" width="4" height="4" fill="#000"/><path d="M1 10.5 H14" stroke="#000" stroke-width="2"/><path d="M3 11 V14 M12 11 V14 M3 13 H12" stroke="#000" stroke-width="1.2"/></svg>
<div class="t" style="left:7.5px;top:297.97px;font-size:10.2px;color:#000;font-weight:normal;">RA (J2000)</div>
<div class="t" style="left:105px;top:297.97px;font-size:10.2px;color:#000;font-weight:normal;">DE (J2000)</div>
<div class="a sk" style="left:5.5px;top:310px;width:92.5px;height:16px;background:#d0d0ff"></div>
<div class="t" style="left:8.5px;top:314.36px;font-size:12.8px;color:#000;font-weight:normal;transform:scaleX(0.88);transform-origin:0 0;">16h 42m 36.95s</div>
<div class="a sk" style="left:102.5px;top:310px;width:93.0px;height:16px;background:#d0d0ff"></div>
<div class="t" style="left:105.5px;top:314.36px;font-size:12.8px;color:#000;font-weight:normal;transform:scaleX(0.88);transform-origin:0 0;">-14° 22' 58.36''</div>
<div class="t" style="left:7.5px;top:331.47px;font-size:10.2px;color:#000;font-weight:normal;">Azimuth</div>
<div class="t" style="left:105px;top:331.47px;font-size:10.2px;color:#000;font-weight:normal;">Altitude</div>
<div class="a sk" style="left:5.5px;top:343.5px;width:75.5px;height:16.5px;background:#d6d6d4"></div>
<div class="t" style="left:8.5px;top:347.86px;font-size:12.8px;color:#a01818;font-weight:normal;transform:scaleX(0.88);transform-origin:0 0;">+170° 36' 21''</div>
<div class="a rz" style="left:84.5px;top:343.5px;width:14.0px;height:16.0px;background:#f0f0f0"></div>
<div class="a" style="left:91.8px;top:355.5px;width:1.6px;height:1.6px;background:#000"></div>
<div class="a sk" style="left:102.5px;top:343.5px;width:75.0px;height:16.5px;background:#d6d6d4"></div>
<div class="t" style="left:105.5px;top:347.86px;font-size:12.8px;color:#a01818;font-weight:normal;transform:scaleX(0.88);transform-origin:0 0;">+27° 47' 57''</div>
<div class="a rz" style="left:181px;top:343.5px;width:14px;height:16.0px;background:#f0f0f0"></div>
<div class="a" style="left:188.2px;top:355.5px;width:1.6px;height:1.6px;background:#000"></div>
<div class="t" style="left:7.5px;top:365.57px;font-size:10.2px;color:#000;font-weight:normal;">Hour Angle</div>
<div class="t" style="left:105px;top:365.57px;font-size:10.2px;color:#000;font-weight:normal;">Magnitude</div>
<div class="t" style="left:162px;top:365.57px;font-size:10.2px;color:#7a7a7a;font-weight:normal;">S.T.</div>
<div class="a sk" style="left:5.5px;top:377.5px;width:92.5px;height:16.5px;background:#d6d6d4"></div>
<div class="t" style="left:8.5px;top:381.86px;font-size:12.8px;color:#a01818;font-weight:normal;transform:scaleX(0.88);transform-origin:0 0;">-00h 34m 17s</div>
<div class="a sk" style="left:102.5px;top:377.5px;width:54.5px;height:16.5px;background:#d0d0ff"></div>
<div class="t" style="left:105.5px;top:381.86px;font-size:12.8px;color:#000;font-weight:normal;transform:scaleX(0.88);transform-origin:0 0;">11.542</div>
<div class="a sk" style="left:160px;top:377.5px;width:35.5px;height:16.5px;background:#f0f0f0"></div>
<div class="t" style="left:7.5px;top:399.87px;font-size:10.2px;color:#000;font-weight:normal;">Rise (UT)</div>
<div class="t" style="left:72.5px;top:399.87px;font-size:10.2px;color:#000;font-weight:normal;">Transit (UT)</div>
<div class="t" style="left:136.5px;top:399.87px;font-size:10.2px;color:#000;font-weight:normal;">Set (UT)</div>
<div class="a sk" style="left:5.5px;top:412px;width:61.0px;height:16px;background:#d6d6d4"></div>
<div class="t" style="left:8.5px;top:416.36px;font-size:12.8px;color:#a01818;font-weight:normal;transform:scaleX(0.88);transform-origin:0 0;">17h27m</div>
<div class="a sk" style="left:69.5px;top:412px;width:62.0px;height:16px;background:#d6d6d4"></div>
<div class="t" style="left:72.5px;top:416.36px;font-size:12.8px;color:#a01818;font-weight:normal;transform:scaleX(0.88);transform-origin:0 0;">22h25m</div>
<div class="a sk" style="left:134.5px;top:412px;width:61.0px;height:16px;background:#d6d6d4"></div>
<div class="t" style="left:137.5px;top:416.36px;font-size:12.8px;color:#a01818;font-weight:normal;transform:scaleX(0.88);transform-origin:0 0;">03h27m</div>
<div class="t" style="left:7.5px;top:433.37px;font-size:10.2px;color:#7a7a7a;font-weight:normal;">Constellation</div>
<div class="t" style="left:105px;top:433.37px;font-size:10.2px;color:#7a7a7a;font-weight:normal;">Size / Incl</div>
<div class="a sk" style="left:5.5px;top:445.5px;width:93.0px;height:16.0px;background:#f0f0f0"></div>
<div class="a sk" style="left:102.5px;top:445.5px;width:93.0px;height:16.0px;background:#f0f0f0"></div>
<div class="t" style="left:7.5px;top:467.47px;font-size:10.2px;color:#7a7a7a;font-weight:normal;">Name</div>
<div class="t" style="left:105px;top:467.47px;font-size:10.2px;color:#7a7a7a;font-weight:normal;">Bayer</div>
<div class="a sk" style="left:5.5px;top:479.5px;width:93.0px;height:16.0px;background:#f0f0f0"></div>
<div class="a sk" style="left:102.5px;top:479.5px;width:93.0px;height:16.0px;background:#f0f0f0"></div>
<div class="t" style="left:7.5px;top:501.37px;font-size:10.2px;color:#7a7a7a;font-weight:normal;">Flamsteed</div>
<div class="t" style="left:105px;top:501.37px;font-size:10.2px;color:#7a7a7a;font-weight:normal;">Description</div>
<div class="a sk" style="left:5.5px;top:514px;width:93.0px;height:16.5px;background:#f0f0f0"></div>
<div class="a sk" style="left:102.5px;top:514px;width:93.0px;height:16.5px;background:#f0f0f0"></div>
<div class="t" style="left:6.5px;top:535.27px;font-size:10.2px;color:#7a7a7a;font-weight:normal;">Other Designations</div>
<div class="a sk" style="left:5px;top:548px;width:190px;height:16.5px;background:#f0f0f0"></div>
<div class="t" style="left:7.5px;top:569.37px;font-size:10.2px;color:#7a7a7a;font-weight:normal;">Lumin.</div>
<div class="t" style="left:43.5px;top:569.37px;font-size:10.2px;color:#7a7a7a;font-weight:normal;">Distance</div>
<div class="t" style="left:120px;top:569.37px;font-size:10.2px;color:#7a7a7a;font-weight:normal;">Variable</div>
<div class="t" style="left:162px;top:569.37px;font-size:10.2px;color:#7a7a7a;font-weight:normal;">Mult.</div>
<div class="a sk" style="left:5.5px;top:582px;width:31.0px;height:16.5px;background:#f0f0f0"></div>
<div class="a sk" style="left:41px;top:582px;width:71px;height:16.5px;background:#f0f0f0"></div>
<div class="a sk" style="left:117.5px;top:582px;width:36.0px;height:16.5px;background:#f0f0f0"></div>
<div class="a sk" style="left:159.5px;top:582px;width:34.0px;height:16.5px;background:#f0f0f0"></div>
<div class="t" style="left:7.5px;top:602.9699999999999px;font-size:10.2px;color:#000;font-weight:normal;">V Mag</div>
<div class="t" style="left:43.5px;top:602.9699999999999px;font-size:10.2px;color:#000;font-weight:normal;">B Mag</div>
<div class="t" style="left:81px;top:602.9699999999999px;font-size:10.2px;color:#7a7a7a;font-weight:normal;">Surf.B.</div>
<div class="t" style="left:117.5px;top:602.9699999999999px;font-size:10.2px;color:#000;font-weight:normal;">RA Err.</div>
<div class="t" style="left:159.5px;top:602.9699999999999px;font-size:10.2px;color:#000;font-weight:normal;">DE Err.</div>
<div class="a sk" style="left:5.5px;top:616px;width:31.0px;height:16.5px;background:#d0d0ff"></div>
<div class="t" style="left:7.5px;top:620.36px;font-size:12.8px;color:#000;font-weight:normal;transform:scaleX(0.88);transform-origin:0 0;">11.54</div>
<div class="a sk" style="left:41px;top:616px;width:32.5px;height:16.5px;background:#d0d0ff"></div>
<div class="t" style="left:43px;top:620.36px;font-size:12.8px;color:#000;font-weight:normal;transform:scaleX(0.88);transform-origin:0 0;">12.69</div>
<div class="a sk" style="left:78.5px;top:616px;width:32.0px;height:16.5px;background:#f0f0f0"></div>
<div class="a sk" style="left:115px;top:616px;width:37px;height:16.5px;background:#d0d0ff"></div>
<div class="t" style="left:118px;top:620.36px;font-size:12.8px;color:#000;font-weight:normal;transform:scaleX(0.88);transform-origin:0 0;">80.9</div>
<div class="a sk" style="left:157px;top:616px;width:36.5px;height:16.5px;background:#d0d0ff"></div>
<div class="t" style="left:160px;top:620.36px;font-size:12.8px;color:#000;font-weight:normal;transform:scaleX(0.88);transform-origin:0 0;">99.3</div>
<div class="t" style="left:7.5px;top:637.17px;font-size:10.2px;color:#000;font-weight:normal;">RA pm</div>
<div class="t" style="left:57px;top:637.17px;font-size:10.2px;color:#000;font-weight:normal;">DE pm</div>
<div class="t" style="left:107px;top:637.17px;font-size:10.2px;color:#000;font-weight:normal;">Er RA pm</div>
<div class="t" style="left:157.5px;top:637.17px;font-size:10.2px;color:#000;font-weight:normal;">Er DE pm</div>
<div class="a sk" style="left:5.5px;top:650px;width:44.5px;height:16.5px;background:#d0d0ff"></div>
<div class="t" style="left:8.5px;top:654.36px;font-size:12.8px;color:#000;font-weight:normal;transform:scaleX(0.88);transform-origin:0 0;">1.6</div>
<div class="a sk" style="left:54.5px;top:650px;width:44.5px;height:16.5px;background:#d0d0ff"></div>
<div class="t" style="left:57.5px;top:654.36px;font-size:12.8px;color:#000;font-weight:normal;transform:scaleX(0.88);transform-origin:0 0;">4.6</div>
<div class="a sk" style="left:104.5px;top:650px;width:45.5px;height:16.5px;background:#d0d0ff"></div>
<div class="t" style="left:107.5px;top:654.36px;font-size:12.8px;color:#000;font-weight:normal;transform:scaleX(0.88);transform-origin:0 0;">2.2</div>
<div class="a sk" style="left:155px;top:650px;width:40.5px;height:16.5px;background:#d0d0ff"></div>
<div class="t" style="left:158px;top:654.36px;font-size:12.8px;color:#000;font-weight:normal;transform:scaleX(0.88);transform-origin:0 0;">2.3</div>
<div class="t" style="left:7.5px;top:670.67px;font-size:10.2px;color:#000;font-weight:normal;">Other Information</div>
<div class="a sk" style="left:5px;top:684px;width:190px;height:75px;background:#f0f0f0"></div>
<div class="a" style="left:6.5px;top:685.5px;width:172px;height:74.5px;background:#d0d0ff"></div>
<div class="a" style="left:187px;top:705px;width:1.5px;height:20px;background:#606060"></div>
<div class="a" style="left:188.5px;top:705px;width:1px;height:20px;background:#fff"></div>
<div class="t" style="left:8.5px;top:689.17px;font-size:10.2px;color:#000;font-weight:normal;transform:scaleX(0.9);transform-origin:0 0;">RA (eq. date):  16h 43m 56.70s</div>
<div class="t" style="left:8.5px;top:701.17px;font-size:10.2px;color:#000;font-weight:normal;transform:scaleX(0.9);transform-origin:0 0;">DE (eq. date):  -14° 25' 32.82''</div>
<div class="t" style="left:8.5px;top:713.17px;font-size:10.2px;color:#000;font-weight:normal;transform:scaleX(0.9);transform-origin:0 0;">Normal mean position &amp; proper</div>
<div class="t" style="left:8.5px;top:725.17px;font-size:10.2px;color:#000;font-weight:normal;transform:scaleX(0.9);transform-origin:0 0;">motion</div>
<div class="t" style="left:8.5px;top:737.17px;font-size:10.2px;color:#000;font-weight:normal;transform:scaleX(0.9);transform-origin:0 0;">Mean RA J2000: 16h 42m 36.95s</div>
<div class="t" style="left:8.5px;top:749.17px;font-size:10.2px;color:#000;font-weight:normal;transform:scaleX(0.9);transform-origin:0 0;">Mean DE J2000: -14° 22' 58.46''</div>
<svg class="a" style="left:0;top:0" width="1308" height="831" viewBox="0 0 1308 831"><rect x="202" y="110" width="1104" height="695" fill="#000"/><rect x="201" y="107" width="1106" height="1" fill="#a0a0a0"/><rect x="201" y="108" width="1106" height="1" fill="#696969"/><rect x="201" y="109" width="1106" height="1" fill="#202020"/><rect x="202" y="108" width="1" height="697" fill="#505050"/><clipPath id="mc"><rect x="202" y="110" width="1104" height="695"/></clipPath><clipPath id="fc"><rect x="206" y="113.5" width="1096" height="690.5"/></clipPath><g clip-path="url(#mc)"><path d="M237 113.2 H1302.2 V804.2 H206.6 V145" fill="none" stroke="#780000" stroke-width="1.5"/><path d="M206.6 804.4 H319" stroke="#a06060" stroke-width="1.6"/><path d="M319 804.4 H1302" stroke="#8a0c0c" stroke-width="1.6"/><path d="M247.5 113 V804" stroke="#646464" stroke-width="1.5"/><path d="M354 113 V605.5 M353.2 605.5 V804" stroke="#646464" stroke-width="1.5"/><path d="M460 113 V804" stroke="#646464" stroke-width="1.5"/><path d="M566 113 V804" stroke="#646464" stroke-width="1.5"/><path d="M672.2 113 V804" stroke="#646464" stroke-width="1.5"/><path d="M778.4 113 V804" stroke="#646464" stroke-width="1.5"/><path d="M884.4 113 V459 M885.3 459 V804" stroke="#646464" stroke-width="1.5"/><path d="M990.4 113 V313 M991.5 313 V804" stroke="#646464" stroke-width="1.5"/><path d="M1096.6 113 V240 M1097.7 240 V804" stroke="#646464" stroke-width="1.5"/><path d="M1202.6 113 V240 M1203.6 240 V678.7 M1204.8 678.7 V804" stroke="#646464" stroke-width="1.5"/><path d="M206 220.1 H1223 M1223 219 H1302" stroke="#646464" stroke-width="1.5"/><path d="M206 365.7 H427 M427 366.9 H1064 M1064 365.5 H1302" stroke="#646464" stroke-width="1.5"/><path d="M206 512.2 H1302" stroke="#646464" stroke-width="1.5"/><path d="M206 657.4 H213.4 M213.4 658.8 H1302" stroke="#646464" stroke-width="1.5"/><rect x="283.2" y="165.5" width="942.3" height="586.3" fill="none" stroke="#c86e10" stroke-width="2"/><rect x="450.2" y="229" width="606.8" height="459" fill="none" stroke="#c20000" stroke-width="2"/><g clip-path="url(#fc)"><circle cx="754" cy="458.7" r="547.8" fill="none" stroke="#7c007c" stroke-width="1.45"/></g><rect x="316.8" y="129.7" width="3.6" height="3.6" fill="#ffff00"/><rect x="391.2" y="238.89999999999998" width="3.6" height="3.6" fill="#ffff00"/><rect x="447.4" y="171.7" width="1" height="1" fill="#909000"/><rect x="670.4" y="293.7" width="1" height="1" fill="#909000"/><rect x="708.5" y="414.0" width="1" height="1" fill="#909000"/><polygon points="925.79,153.30 924.81,155.01 923.10,155.99 921.39,155.01 920.41,153.30 921.39,151.59 923.10,150.61 924.81,151.59" fill="#ffff00"/><rect x="1037.9" y="145.89999999999998" width="3.6" height="3.6" fill="#ffff00"/><polygon points="1060.96,154.10 1060.07,155.67 1058.50,156.56 1056.93,155.67 1056.04,154.10 1056.93,152.53 1058.50,151.64 1060.07,152.53" fill="#ffff00"/><polygon points="1296.73,250.30 1295.27,252.87 1292.70,254.33 1290.13,252.87 1288.67,250.30 1290.13,247.73 1292.70,246.27 1295.27,247.73" fill="#ffff00"/><rect x="985.5" y="270.8" width="3.4" height="3.4" fill="#ffff00"/><rect x="1092.3" y="300.3" width="3.4" height="3.4" fill="#ffff00"/><polygon points="979.63,420.00 978.17,422.57 975.60,424.03 973.03,422.57 971.57,420.00 973.03,417.43 975.60,415.97 978.17,417.43" fill="#ffff00"/><polygon points="504.02,672.60 502.59,675.09 500.10,676.52 497.61,675.09 496.18,672.60 497.61,670.11 500.10,668.68 502.59,670.11" fill="#ffff00"/><rect x="579.3" y="678.5999999999999" width="3.4" height="3.4" fill="#ffff00"/><polygon points="314.08,734.20 312.45,737.05 309.60,738.68 306.75,737.05 305.12,734.20 306.75,731.35 309.60,729.72 312.45,731.35" fill="#ffff00"/><rect x="340.0" y="727.8" width="3.4" height="3.4" fill="#ffff00"/><rect x="370.8" y="739.0" width="3.4" height="3.4" fill="#ffff00"/><polygon points="418.10,770.60 417.08,772.38 415.30,773.40 413.52,772.38 412.50,770.60 413.52,768.82 415.30,767.80 417.08,768.82" fill="#ffff00"/><polygon points="507.42,767.60 505.99,770.09 503.50,771.52 501.01,770.09 499.58,767.60 501.01,765.11 503.50,763.68 505.99,765.11" fill="#ffff00"/><polygon points="610.28,773.60 608.65,776.45 605.80,778.08 602.95,776.45 601.32,773.60 602.95,770.75 605.80,769.12 608.65,770.75" fill="#ffff00"/><rect x="893.5" y="500.3" width="3.6" height="3.6" fill="#ffff00"/><polygon points="787.00,593.20 785.98,594.98 784.20,596.00 782.42,594.98 781.40,593.20 782.42,591.42 784.20,590.40 785.98,591.42" fill="#ffff00"/><rect x="845.6" y="651.2" width="3.6" height="3.6" fill="#ffff00"/><rect x="999.5" y="557.5" width="1" height="1" fill="#909000"/><rect x="1099.1" y="564.0" width="1" height="1" fill="#909000"/></g><rect x="246.5" y="212.0" width="39" height="13.0" fill="#000" stroke="#6a6a6a" stroke-width="1"/><rect x="246.5" y="358.0" width="39" height="13.0" fill="#000" stroke="#6a6a6a" stroke-width="1"/><rect x="246.5" y="505.0" width="39" height="13.0" fill="#000" stroke="#6a6a6a" stroke-width="1"/><rect x="246.5" y="651.5" width="39" height="13" fill="#000" stroke="#6a6a6a" stroke-width="1"/><rect x="224.0" y="780.0" width="44.0" height="13.5" fill="#000" stroke="#6a6a6a" stroke-width="1"/><rect x="320.0" y="780.0" width="63.5" height="13.5" fill="#000" stroke="#6a6a6a" stroke-width="1"/><rect x="437.0" y="780.0" width="43.0" height="13.5" fill="#000" stroke="#6a6a6a" stroke-width="1"/><rect x="533.5" y="780.0" width="62.5" height="13.5" fill="#000" stroke="#6a6a6a" stroke-width="1"/><rect x="649.0" y="780.0" width="44.0" height="13.5" fill="#000" stroke="#6a6a6a" stroke-width="1"/><rect x="746.5" y="780.0" width="62.5" height="13.5" fill="#000" stroke="#6a6a6a" stroke-width="1"/><rect x="863.5" y="780.0" width="43" height="13.5" fill="#000" stroke="#6a6a6a" stroke-width="1"/><rect x="960.0" y="780.0" width="61.5" height="13.5" fill="#000" stroke="#6a6a6a" stroke-width="1"/><rect x="1076.5" y="780.0" width="41.5" height="13.5" fill="#000" stroke="#6a6a6a" stroke-width="1"/><rect x="1172.5" y="780.0" width="62" height="13.5" fill="#000" stroke="#6a6a6a" stroke-width="1"/></svg>
<div class="t" style="left:247.5px;top:212.63000000000002px;font-size:12.6px;color:#d8d860;font-weight:normal;letter-spacing:-0.45px">-14°40'</div>
<div class="t" style="left:247.5px;top:358.63px;font-size:12.6px;color:#d8d860;font-weight:normal;letter-spacing:-0.45px">-14°30'</div>
<div class="t" style="left:247.5px;top:505.62999999999994px;font-size:12.6px;color:#d8d860;font-weight:normal;letter-spacing:-0.45px">-14°20'</div>
<div class="t" style="left:247.5px;top:652.13px;font-size:12.6px;color:#d8d860;font-weight:normal;letter-spacing:-0.45px">-14°10'</div>
<div class="t" style="left:186.3px;width:120px;text-align:center;top:781.1px;font-size:13.2px;color:#d0d0d0;transform:scaleX(0.86);letter-spacing:0.1px">16h45m</div>
<div class="t" style="left:292.05px;width:120px;text-align:center;top:781.1px;font-size:13.2px;color:#d0d0d0;transform:scaleX(0.86);letter-spacing:0.1px">16h44m30s</div>
<div class="t" style="left:398.8px;width:120px;text-align:center;top:781.1px;font-size:13.2px;color:#d0d0d0;transform:scaleX(0.86);letter-spacing:0.1px">16h44m</div>
<div class="t" style="left:505.04999999999995px;width:120px;text-align:center;top:781.1px;font-size:13.2px;color:#d0d0d0;transform:scaleX(0.86);letter-spacing:0.1px">16h43m30s</div>
<div class="t" style="left:611.3px;width:120px;text-align:center;top:781.1px;font-size:13.2px;color:#d0d0d0;transform:scaleX(0.86);letter-spacing:0.1px">16h43m</div>
<div class="t" style="left:718.05px;width:120px;text-align:center;top:781.1px;font-size:13.2px;color:#d0d0d0;transform:scaleX(0.86);letter-spacing:0.1px">16h42m30s</div>
<div class="t" style="left:825.3px;width:120px;text-align:center;top:781.1px;font-size:13.2px;color:#d0d0d0;transform:scaleX(0.86);letter-spacing:0.1px">16h42m</div>
<div class="t" style="left:931.05px;width:120px;text-align:center;top:781.1px;font-size:13.2px;color:#d0d0d0;transform:scaleX(0.86);letter-spacing:0.1px">16h41m30s</div>
<div class="t" style="left:1037.55px;width:120px;text-align:center;top:781.1px;font-size:13.2px;color:#d0d0d0;transform:scaleX(0.86);letter-spacing:0.1px">16h41m</div>
<div class="t" style="left:1143.8px;width:120px;text-align:center;top:781.1px;font-size:13.2px;color:#d0d0d0;transform:scaleX(0.86);letter-spacing:0.1px">16h40m30s</div>
<div class="a" style="left:242px;top:112.2px;width:45px;height:15.6px;background:#ffc0c0"></div>
<div class="t" style="left:252.3px;top:113.42999999999999px;font-size:13.2px;color:#a81010;font-weight:normal;transform:scaleX(0.86);transform-origin:0 0;">Field</div>
<div class="a" style="left:289px;top:112.2px;width:45px;height:15.6px;background:#808080"></div>
<div class="t" style="left:291.5px;top:113.42999999999999px;font-size:13.2px;color:#dcdcdc;font-weight:normal;transform:scaleX(0.86);transform-origin:0 0;">Horizon</div>
<div class="a" style="left:1211.5px;top:113.5px;width:43px;height:13px;background:#808080"></div>
<div class="t" style="left:1213.5px;top:114.72px;font-size:11.2px;color:#e0e060;font-weight:bold;transform:scaleX(0.9);transform-origin:0 0;">Tycho-2</div>
<div class="a" style="left:1255px;top:113.5px;width:47px;height:13px;background:#008a00"></div>
<div class="t" style="left:1258.5px;top:114.72px;font-size:11.2px;color:#e0f070;font-weight:bold;transform:scaleX(0.9);transform-origin:0 0;">RNGCIC</div>
<div class="t" style="left:734px;top:151.67px;font-size:12.2px;color:#c8c8c8;font-weight:normal;transform:scaleX(0.9);transform-origin:0 0;">IMX174</div>
<div class="t" style="left:734px;top:214.67px;font-size:12.2px;color:#c8c8c8;font-weight:normal;transform:scaleX(0.9);transform-origin:0 0;">IMX430</div>
<div class="t" style="left:630px;top:437.6px;font-size:13px;color:#d0d0d0;font-weight:bold;letter-spacing:-0.7px">06/17/2023 21:50:52 UT</div>
<div class="t" style="left:942px;top:437.6px;font-size:13px;color:#d0d0d0;font-weight:bold;letter-spacing:-0.8px">21:50</div>
<div class="t" style="left:1155px;top:437.0px;font-size:13px;color:#d0d0d0;font-weight:bold;letter-spacing:-0.8px">21:49</div>
<svg class="a" style="left:0px;top:0px;" width="1308" height="831" viewBox="0 0 1308 831"><path d="M777 469 H1049 M1049 468 H1156" stroke="#808080" stroke-width="1.5"/><path d="M942.3 453 V469 M1156 453 V468" stroke="#808080" stroke-width="1.2"/><path d="M942.3 464.5 L946.8 469 L942.3 473.5 L937.8 469 Z" fill="#00e000"/><rect x="1154.5" y="466.5" width="3" height="3" fill="#00e000"/><path d="M748 467.6 L737 466.3 L731.5 465.8 L729 467 L729 471 L731.5 472.2 L737 471.7 L748 470.4 Z M765 467.6 L771 466.3 L775 465.8 L777.6 467 L777.6 471 L775 472.2 L771 471.7 L765 470.4 Z M752.4 461 L751.3 452 L750.6 447.5 L752 445.2 L755.2 445.2 L756.6 447.5 L755.9 452 L754.8 461 Z M752.4 477 L751.3 486 L750.6 490.5 L752 492.8 L755.2 492.8 L756.6 490.5 L755.9 486 L754.8 477 Z" fill="#ff4040"/><path d="M735 469 H748 M765 469 H775 M753.6 448 V461 M753.6 477 V490" stroke="#209020" stroke-width="0.9"/><circle cx="756.8" cy="469" r="8.4" fill="none" stroke="#c8c8c8" stroke-width="2"/><rect x="752" y="467" width="4" height="4" fill="#ffff00"/><circle cx="757.5" cy="469" r="1.5" fill="#00e000"/></svg>
<svg class="a" style="left:202px;top:110px;" width="36" height="36" viewBox="0 0 36 36"><circle cx="17.4" cy="16.9" r="13.6" fill="#000080" stroke="#a0a0b0" stroke-width="1.2" stroke-dasharray="1.5 .8"/><path d="M17.4 16.9 H4.5" stroke="#c04090" stroke-width="1.6"/><path d="M17.4 16.9 V29" stroke="#e0d060" stroke-width="1.4"/><path d="M17.4 0 l2.6 3.4 h-5.2z M17.4 33.6 l2.6 -3.4 h-5.2z M0.8 16.9 l3.4 2.6 v-5.2z M34 16.9 l-3.4 2.6 v-5.2z" fill="#10e0f0"/></svg>
<div class="a" style="left:4px;top:805px;width:1303px;height:26px;background:#f0f0f0"></div>
<div class="a" style="left:201px;top:805.5px;width:1105px;height:2px;background:#fafafa"></div>
<div class="a sk" style="left:5px;top:809.5px;width:190.5px;height:16.5px;background:#f0f0f0"></div>
<div class="t" style="left:8.5px;top:813.5px;font-size:13px;color:#000;font-weight:normal;transform:scaleX(0.9);transform-origin:0 0;">Ready</div>
<div class="t" style="left:202px;top:813.0px;font-size:13px;color:#000;font-weight:normal;transform:scaleX(0.88);transform-origin:0 0;">RA:</div>
<div class="a sk" style="left:222.5px;top:810px;width:19.0px;height:17px;background:#f0f0f0"></div>
<div class="t" style="left:225.5px;top:812.69px;font-size:13.6px;color:#a01818;font-weight:normal;transform:scaleX(0.84);transform-origin:0 0;">16</div>
<div class="a sk" style="left:243.5px;top:810px;width:18.5px;height:17px;background:#f0f0f0"></div>
<div class="t" style="left:246.5px;top:812.69px;font-size:13.6px;color:#a01818;font-weight:normal;transform:scaleX(0.84);transform-origin:0 0;">42</div>
<div class="a sk" style="left:264px;top:810px;width:18px;height:17px;background:#f0f0f0"></div>
<div class="t" style="left:267px;top:812.69px;font-size:13.6px;color:#a01818;font-weight:normal;transform:scaleX(0.84);transform-origin:0 0;">37</div>
<div class="t" style="left:290px;top:813.0px;font-size:13px;color:#000;font-weight:normal;transform:scaleX(0.88);transform-origin:0 0;">DE:</div>
<div class="a sk" style="left:311px;top:810px;width:24.5px;height:17px;background:#f0f0f0"></div>
<div class="t" style="left:314px;top:812.69px;font-size:13.6px;color:#a01818;font-weight:normal;transform:scaleX(0.84);transform-origin:0 0;">-14</div>
<div class="a sk" style="left:337.5px;top:810px;width:19.0px;height:17px;background:#f0f0f0"></div>
<div class="t" style="left:340.5px;top:812.69px;font-size:13.6px;color:#a01818;font-weight:normal;transform:scaleX(0.84);transform-origin:0 0;">23</div>
<div class="a sk" style="left:358.5px;top:810px;width:18.0px;height:17px;background:#f0f0f0"></div>
<div class="t" style="left:361.5px;top:812.69px;font-size:13.6px;color:#a01818;font-weight:normal;transform:scaleX(0.84);transform-origin:0 0;">41</div>
<div class="t" style="left:382px;top:813.0px;font-size:13px;color:#000;font-weight:normal;transform:scaleX(0.88);transform-origin:0 0;">Field:</div>
<div class="a sk" style="left:412px;top:810px;width:24px;height:17px;background:#f0f0f0"></div>
<div class="t" style="right:873px;top:812.69px;font-size:13.6px;color:#a01818;font-weight:normal;transform:scaleX(0.84);transform-origin:100% 0;">01</div>
<div class="a sk" style="left:438px;top:810px;width:18.5px;height:17px;background:#f0f0f0"></div>
<div class="t" style="right:852.5px;top:812.69px;font-size:13.6px;color:#a01818;font-weight:normal;transform:scaleX(0.84);transform-origin:100% 0;">14</div>
<div class="a sk" style="left:458.5px;top:810px;width:18.0px;height:17px;background:#f0f0f0"></div>
<div class="t" style="right:832.5px;top:812.69px;font-size:13.6px;color:#a01818;font-weight:normal;transform:scaleX(0.84);transform-origin:100% 0;">54</div>
<svg class="a" style="left:483px;top:811px;" width="32" height="16" viewBox="0 0 32 16"><defs><radialGradient id="gg" cx="40%" cy="35%" r="65%"><stop offset="0" stop-color="#80ff80"/><stop offset=".35" stop-color="#10e010"/><stop offset="1" stop-color="#00a000"/></radialGradient></defs><circle cx="7.6" cy="8.1" r="6.6" fill="url(#gg)" stroke="#208020" stroke-width=".5"/><circle cx="22.8" cy="8.1" r="6.6" fill="url(#gg)" stroke="#208020" stroke-width=".5"/><path d="M5 7 L7 5" stroke="#fff" stroke-width="1.2"/><path d="M20.2 7 L22.2 5" stroke="#fff" stroke-width="1.2"/></svg>
<div class="a" style="left:518.5px;top:808px;width:114px;height:12px;background:#ff0000"></div>
<div class="t" style="left:520.5px;top:808.78px;font-size:11.6px;color:#ffff60;font-weight:bold;transform:scaleX(0.96);transform-origin:0 0;">06/17/2023 21:50:52</div>
<div class="t" style="left:530px;top:820.38px;font-size:9px;color:#404040;font-weight:normal;">+8°28'23'' / +47°20'31''</div>
<svg class="a" style="left:636px;top:809px;" width="19" height="18" viewBox="0 0 19 18"><circle cx="9.3" cy="8.6" r="8.7" fill="#000080"/></svg>
<svg class="a" style="left:665px;top:807px;" width="62" height="22" viewBox="0 0 62 22"><path d="M1.4 3.4 H28 M33.5 3.4 H59.7 M6 14 H59.7" stroke="#828282" stroke-width="2"/><path d="M32.6 1 Q33 5 32 8 L30.8 9.6 M5.4 12 Q6 15 5 18.5 L3.6 20.2" stroke="#7a7a7a" stroke-width="1.5" fill="none"/></svg>
<div class="a rz" style="left:737.5px;top:808.5px;width:17.5px;height:17.5px;background:#c4ffc4"></div>
<div class="a rz" style="left:757px;top:808.5px;width:19px;height:17.5px;background:#c4ffc4"></div>
<div class="t" style="left:742.5px;top:809.61px;font-size:17px;color:#0000a0;font-weight:bold;">+</div>
<div class="a" style="left:762px;top:817.5px;width:11px;height:2.2px;background:#0000a0"></div>
<div class="a" style="left:780.5px;top:808.5px;width:90px;height:19.5px;background:#e0e0e0"></div>
<div class="t" style="left:782px;top:810.08px;font-size:9px;color:#a01818;font-weight:normal;">JD: 2460113.41032</div>
<div class="t" style="left:782px;top:819.28px;font-size:9px;color:#a01818;font-weight:normal;">ST: 16:08:20</div>
<div class="a sk" style="left:1174px;top:809.5px;width:128.5px;height:19.5px;background:#f0f0f0"></div>
<div class="t" style="left:1177px;top:813.59px;font-size:12.3px;color:#106010;font-weight:normal;transform:scaleX(0.955);transform-origin:0 0;">16h42m35s  -14°23'00''</div>
<div class="a" style="left:1306px;top:805px;width:2px;height:26px;background:#f0f0f0"></div>
<svg class="a" style="left:0px;top:0px;" width="1308" height="831" viewBox="0 0 1308 831"><path d="M1308 822 V831 H1299 A8 8 0 0 0 1307.2 822.5 Z" fill="#8aa0b4"/></svg>
<div class="a" style="left:1173.5px;top:809.5px;width:1px;height:21px;background:#a0a0a0"></div>
<div class="a" style="left:0px;top:830px;width:1308px;height:1px;background:#c8ccd0"></div>
<div class="a" style="left:0px;top:828px;width:4px;height:3px;background:#7890a4"></div>
</body></html>
